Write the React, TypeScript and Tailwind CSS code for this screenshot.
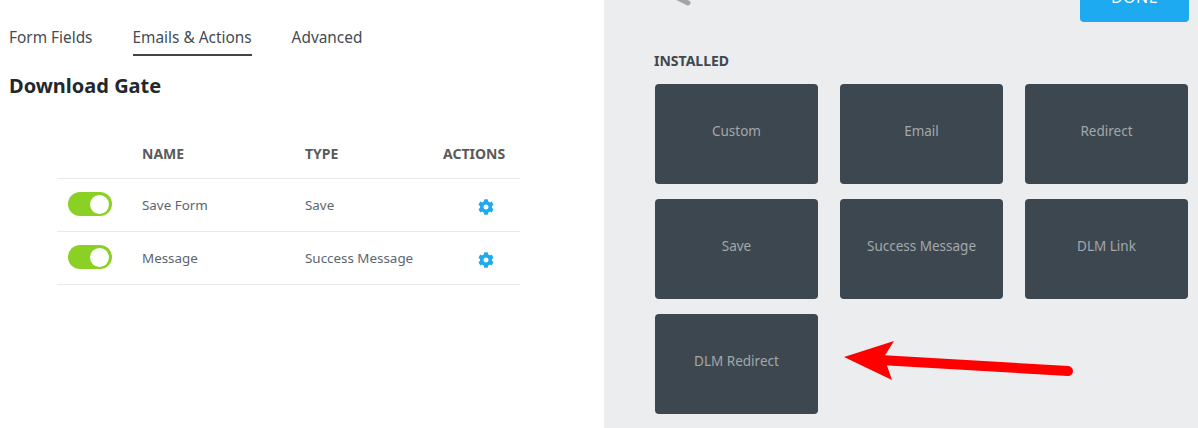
import { FaCog } from "react-icons/fa";

const font = "font-['Noto_Sans','Open_Sans',sans-serif]";

const actions = [
  { name: "Save Form", type: "Save" },
  { name: "Message", type: "Success Message" },
];

const installed = ["Custom", "Email", "Redirect", "Save", "Success Message", "DLM Link", "DLM Redirect"];

function Toggle() {
  return (
    <div className="flex h-6 w-11 items-center justify-end rounded-full bg-[#8bd024] pr-[3px]">
      <div className="size-[19px] rounded-full bg-white" />
    </div>
  );
}

export default function App() {
  return (
    <div className={`relative flex h-[428px] w-[1198px] overflow-hidden bg-white ${font}`}>
      <div className="w-[604px] shrink-0">
        <div className="flex gap-10 pl-[9px] pt-[26px] text-[15.4px] leading-[23px] text-[#444b52]">
          <div className="h-[30px]">Form Fields</div>
          <div className="h-[30px] border-b-2 border-[#444444]">Emails &amp; Actions</div>
          <div className="h-[30px]">Advanced</div>
        </div>
        <h1 className="pl-[9px] pt-[16px] text-[20px] font-bold leading-[28px] text-[#23282d]">Download Gate</h1>

        <div className="ml-[57px] mt-[41px] w-[463px] text-[13.4px] text-[#5c6670]">
          <div className="flex h-[38px] items-start border-b border-[#e8e9ea] pt-[3px] text-[14px] font-bold leading-[20px] text-[#5a5a5a]">
            <div className="ml-[85px] w-[163px]">NAME</div>
            <div className="w-[138px]">TYPE</div>
            <div>ACTIONS</div>
          </div>
          {actions.map((a) => (
            <div key={a.name} className="flex h-[53px] items-center border-b border-[#e8e9ea]">
              <div className="w-[85px] pb-[2px] pl-[11px]">
                <Toggle />
              </div>
              <div className="w-[163px]">{a.name}</div>
              <div className="w-[173px]">{a.type}</div>
              <FaCog className="mt-[3px] size-4 text-[#1eaaf1]" />
            </div>
          ))}
        </div>
      </div>

      <div className="flex-1 bg-[#ebedef]">
        <div className="flex h-[22px] items-end justify-between pl-[71px] pr-[9px]">
          <svg width="16" height="6" viewBox="0 0 16 6" className="mb-[16px]">
            <line x1="1" y1="-3" x2="13" y2="3" stroke="#a3a6a9" strokeWidth="5" strokeLinecap="round" />
          </svg>
          <div className="flex h-[60px] w-[109px] shrink-0 items-center justify-center rounded-b-[4px] bg-[#1eaaf1] pt-[10px] text-[16px] tracking-[0.5px] text-white">
            DONE
          </div>
        </div>
        <div className="pl-[50px] pt-[29px]">
          <div className="text-[14px] font-bold leading-[20px] text-[#3f474f]">INSTALLED</div>
          <div className="mt-[13px] ml-px grid w-[533px] grid-cols-[163px_163px_163px] gap-x-[22px] gap-y-[15px]">
            {installed.map((label) => (
              <div
                key={label}
                className="flex h-[100px] items-center justify-center rounded-[4px] bg-[#3d474f] pb-[5px] text-[13.5px] text-[#a3a8ac]"
              >
                {label}
              </div>
            ))}
          </div>
        </div>
      </div>

      {/* annotation arrow */}
      <svg className="absolute left-[840px] top-[336px]" width="240" height="50" viewBox="0 0 240 50">
        <line x1="40" y1="24" x2="228" y2="35" stroke="#ff0000" strokeWidth="10" strokeLinecap="round" />
        <polygon points="4,21 54,5 44,21 52,44" fill="#ff0000" />
      </svg>
    </div>
  );
}
